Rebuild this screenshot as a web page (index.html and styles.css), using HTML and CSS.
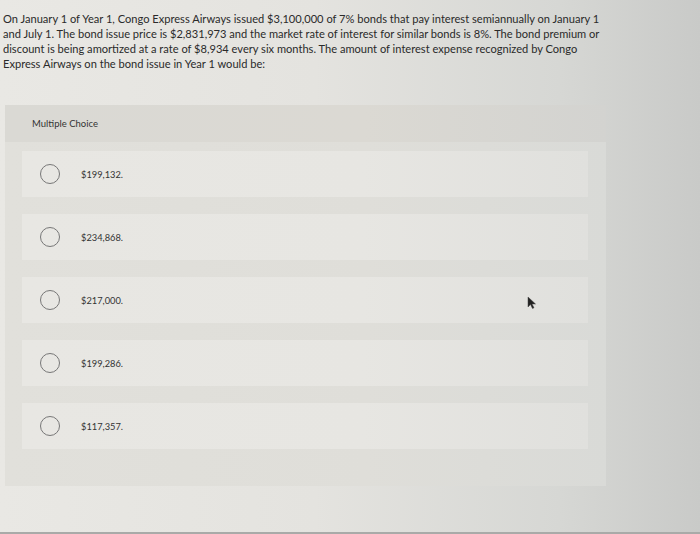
FILE: index.html
```html
<!DOCTYPE html>
<html>
<head>
<meta charset="utf-8">
<link rel="stylesheet" href="styles.css">
</head>
<body>
<div class="page">
  <p class="question">On January 1 of Year 1, Congo Express Airways issued $3,100,000 of 7% bonds that pay interest semiannually on January 1<br>and July 1. The bond issue price is $2,831,973 and the market rate of interest for similar bonds is 8%. The bond premium or<br>discount is being amortized at a rate of $8,934 every six months. The amount of interest expense recognized by Congo<br>Express Airways on the bond issue in Year 1 would be:</p>
  <div class="mc">
    <div class="mc-head">Multiple Choice</div>
    <div class="options">
      <div class="option"><span class="radio"></span><span class="label">$199,132.</span></div>
      <div class="option"><span class="radio"></span><span class="label">$234,868.</span></div>
      <div class="option"><span class="radio"></span><span class="label">$217,000.</span></div>
      <div class="option"><span class="radio"></span><span class="label">$199,286.</span></div>
      <div class="option"><span class="radio"></span><span class="label">$117,357.</span></div>
    </div>
  </div>
  <svg class="cursor" width="9" height="13" viewBox="0 0 9 13"><path d="M1 1 L1 11 L3.5 8.5 L5.5 12.5 L7 11.8 L5 8 L8.5 8 Z" fill="#222" stroke="#444" stroke-width="0.5"/></svg>
</div>
</body>
</html>
```

FILE: styles.css
```css
html, body {
  margin: 0;
  padding: 0;
}
body {
  width: 700px;
  height: 534px;
  overflow: hidden;
  font-family: "Lato", "Liberation Sans", sans-serif;
  color: #2e2e2e;
  background: linear-gradient(90deg, #e9e8e4 0%, #e4e3df 45%, #d6d7d4 80%, #c9cac8 100%);
}
.page {
  position: relative;
  height: 532px;
  border-bottom: 2px solid #a9aaa8;
}
.question {
  margin: 0;
  padding: 11px 0 0 3px;
  font-size: 11.1px;
  line-height: 15px;
  white-space: nowrap;
  color: #2a2a2a;
}
.mc {
  margin: 34px 0 0 5px;
  width: 601px;
  background: linear-gradient(90deg, #e1e0db 0%, #dfded9 60%, #d9dad7 100%);
  padding-bottom: 37px;
}
.mc-head {
  height: 37px;
  display: flex;
  align-items: center;
  padding-left: 27px;
  font-size: 9.5px;
  color: #333;
  background: linear-gradient(90deg, #dad9d4 0%, #dbd9d3 60%, #d3d3d0 100%);
}
.options {
  display: flex;
  flex-direction: column;
  gap: 17px;
  padding: 9px 18px 0 17px;
}
.option {
  height: 46px;
  display: flex;
  align-items: center;
  padding-left: 18px;
  background: linear-gradient(90deg, #e8e7e3 0%, #e7e6e2 60%, #e0e0dd 100%);
}
.radio {
  width: 18px;
  height: 18px;
  border: 1px solid #777;
  border-radius: 50%;
  flex: none;
}
.label {
  margin-left: 21px;
  font-size: 9.3px;
  color: #333;
}
.cursor {
  position: absolute;
  left: 527px;
  top: 296px;
}
```
